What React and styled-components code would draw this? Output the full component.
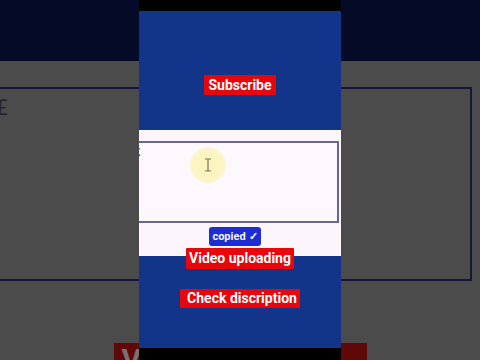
import styled, { createGlobalStyle } from 'styled-components'

const GlobalStyle = createGlobalStyle`
  html, body {
    margin: 0;
    padding: 0;
    background: #000;
  }
  body {
    font-family: Roboto, "Liberation Sans", sans-serif;
  }
`

const Stage = styled.div`
  display: grid;
  width: 480px;
  height: 360px;
  overflow: hidden;
`

// blurred, dimmed copy of the short behind it
const Backdrop = styled.div`
  grid-area: 1 / 1;
  display: flex;
  flex-direction: column;
  background: #4b4b4b;
  overflow: hidden;
`

const BackdropBand = styled.div`
  height: 61px;
  flex: none;
  background: #050b26;
`

const BackdropBox = styled.div`
  flex: none;
  height: 194px;
  box-sizing: border-box;
  margin: 26px 8px 0 -10px;
  border: 2px solid #17173a;
  padding: 8px 0 0 3px;
  color: #262630;
  font-size: 22px;
  line-height: 22px;
  font-family: "DejaVu Sans", sans-serif;
`

const BackdropLabel = styled.div`
  flex: none;
  align-self: center;
  width: 253px;
  height: 26px;
  margin-top: 62px;
  background: #5f0808;
  color: #7a7272;
  font-weight: 700;
  font-size: 30px;
  line-height: 34px;
  padding-left: 8px;
  box-sizing: border-box;
  overflow: hidden;
`

const Short = styled.div`
  grid-area: 1 / 1;
  justify-self: center;
  width: 202px;
  height: 360px;
  display: flex;
  flex-direction: column;
  position: relative;
  z-index: 1;
`

const Bar = styled.div`
  height: ${(p) => p.h}px;
  flex: none;
  background: #000;
`

const BlueSection = styled.div`
  flex: none;
  height: ${(p) => p.h}px;
  background: #12358a;
  display: flex;
  flex-direction: column;
  align-items: center;
  padding-top: ${(p) => p.top || 0}px;
  box-sizing: border-box;
`

const WhiteSection = styled.div`
  flex: none;
  height: 126px;
  background: #fcf6fc;
  display: flex;
  flex-direction: column;
  align-items: center;
  padding-top: 11px;
  box-sizing: border-box;
`

const Caption = styled.div`
  background: #e8050c;
  color: #fff;
  font-weight: 700;
  font-size: 14px;
  line-height: ${(p) => p.lh || 20}px;
  padding: ${(p) => p.pad || '0 4px'};
  margin-top: ${(p) => p.mt || 0}px;
  border-radius: 1px;
  white-space: nowrap;
  position: relative;
  z-index: 2;
`

const TextBox = styled.div`
  position: relative;
  align-self: stretch;
  height: 82px;
  margin-right: 2px;
  border: 2px solid #69678f;
  border-left: none;
  background: #fdf8fd;
  box-sizing: border-box;
  overflow: hidden;
  font-family: "DejaVu Serif", serif;
  font-size: 11px;
  color: #333;
`

const TypedChar = styled.span`
  display: block;
  margin: 3px 0 0 -5px;
`

const CursorGlow = styled.div`
  position: absolute;
  left: 51px;
  top: 4px;
  width: 36px;
  height: 36px;
  border-radius: 50%;
  background: radial-gradient(circle, #fbf4b8 0%, #fbf5c4 60%, rgba(252, 246, 210, 0) 100%);
  display: flex;
  align-items: center;
  justify-content: center;
`

const CopiedButton = styled.div`
  margin: 4px 10px 0 0;
  width: 52px;
  height: 19px;
  border-radius: 3px;
  background: #1e2dd3;
  color: #f2f2ff;
  font-size: 11px;
  font-weight: 700;
  display: flex;
  align-items: center;
  justify-content: center;
  gap: 3px;
`

export default function App() {
  return (
    <>
      <GlobalStyle />
      <Stage>
        <Backdrop>
          <BackdropBand />
          <BackdropBox>£</BackdropBox>
          <BackdropLabel>V</BackdropLabel>
        </Backdrop>

        <Short>
          <Bar h={11} />
          <BlueSection h={119} top={64}>
            <Caption>Subscribe</Caption>
          </BlueSection>
          <WhiteSection>
            <TextBox>
              <TypedChar>£</TypedChar>
              <CursorGlow>
                <svg width="8" height="14" viewBox="0 0 8 14">
                  <path d="M1 1h6M4 1v12M1 13h6" stroke="#7d735e" strokeWidth="1.2" fill="none" />
                </svg>
              </CursorGlow>
            </TextBox>
            <CopiedButton>
              copied
              <span>✓</span>
            </CopiedButton>
          </WhiteSection>
          <BlueSection h={92}>
            <Caption mt={-8} lh={21} pad="0 3px 0 3px">Video uploading</Caption>
            <Caption mt={20} lh={19} pad="0 3px 0 7px">Check discription</Caption>
          </BlueSection>
          <Bar h={12} />
        </Short>
      </Stage>
    </>
  )
}
